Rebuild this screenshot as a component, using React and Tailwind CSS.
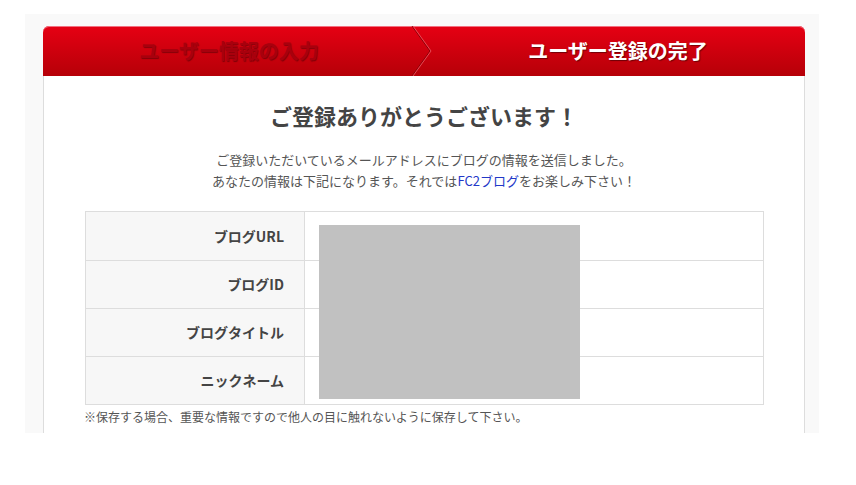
import React from "react"

const ROWS = ["ブログURL", "ブログID", "ブログタイトル", "ニックネーム"]

const FONT = { fontFamily: '"Noto Sans CJK JP", "Noto Sans", sans-serif' }

const Header = () => {
  return (
    <div className="relative flex h-[50px] rounded-t-[6px] bg-gradient-to-b from-[#e60013] to-[#b60008] shadow-[inset_0_1px_0_#f27080]">
      <div className="flex w-[372px] items-center justify-center">
        <span className="text-[20px] font-bold text-[#a8000d] [text-shadow:1px_1px_1px_rgba(0,0,0,0.35)]">
          ユーザー情報の入力
        </span>
      </div>
      <div className="w-[16px]" />
      <div className="flex flex-1 items-center justify-center">
        <span className="text-[20px] font-bold text-white [text-shadow:1px_1px_1px_rgba(0,0,0,0.45)]">
          ユーザー登録の完了
        </span>
      </div>
      <svg
        className="absolute left-[368px] top-0"
        width="22"
        height="50"
        viewBox="0 0 22 50"
      >
        <polyline points="1,0 19,25 1,50" fill="none" stroke="#8a0008" strokeWidth="1" />
        <polyline points="2,0 20,25 2,50" fill="none" stroke="#f05a68" strokeWidth="0.8" />
      </svg>
    </div>
  )
}

const InfoTable = () => {
  return (
    <div className="relative ml-[1px] mt-[20px] border border-[#dddddd]">
      {ROWS.map((label, index) => (
        <div
          key={index}
          className={`flex h-[48px] ${index > 0 ? "border-t border-[#dddddd]" : ""}`}
        >
          <div className="flex w-[219px] items-center justify-end border-r border-[#dddddd] bg-[#f7f7f7] pr-[20px] text-[14px] font-bold text-[#444444]">
            {label}
          </div>
          <div className="flex-1 bg-white" />
        </div>
      ))}
      <div className="absolute left-[233px] top-[13px] h-[174px] w-[261px] bg-[#c1c1c1]" />
    </div>
  )
}

const App = () => {
  return (
    <div className="min-h-[485px] bg-white pt-[14px]" style={FONT}>
      <div className="ml-[25px] h-[419px] w-[794px] overflow-hidden bg-[#f9f9f9] pl-[18px] pt-[12px]">
        <div className="h-[420px] w-[762px]">
          <Header />
          <div className="h-full border-x border-[#dddddd] bg-white px-[40px] pt-[24px]">
            <h1 className="text-center text-[22px] font-bold leading-[30px] text-[#444444]">
              ご登録ありがとうございます！
            </h1>
            <div className="mt-[19px] text-center text-[13px] leading-[21px] text-[#555555]">
              <p>ご登録いただいているメールアドレスにブログの情報を送信しました。</p>
              <p>
                あなたの情報は下記になります。それでは
                <span className="text-[#2238c8]">FC2ブログ</span>
                をお楽しみ下さい！
              </p>
            </div>
            <InfoTable />
            <p className="mt-[3px] text-[12px] leading-[18px] text-[#555555]">
              ※保存する場合、重要な情報ですので他人の目に触れないように保存して下さい。
            </p>
          </div>
        </div>
      </div>
    </div>
  )
}

export default App
